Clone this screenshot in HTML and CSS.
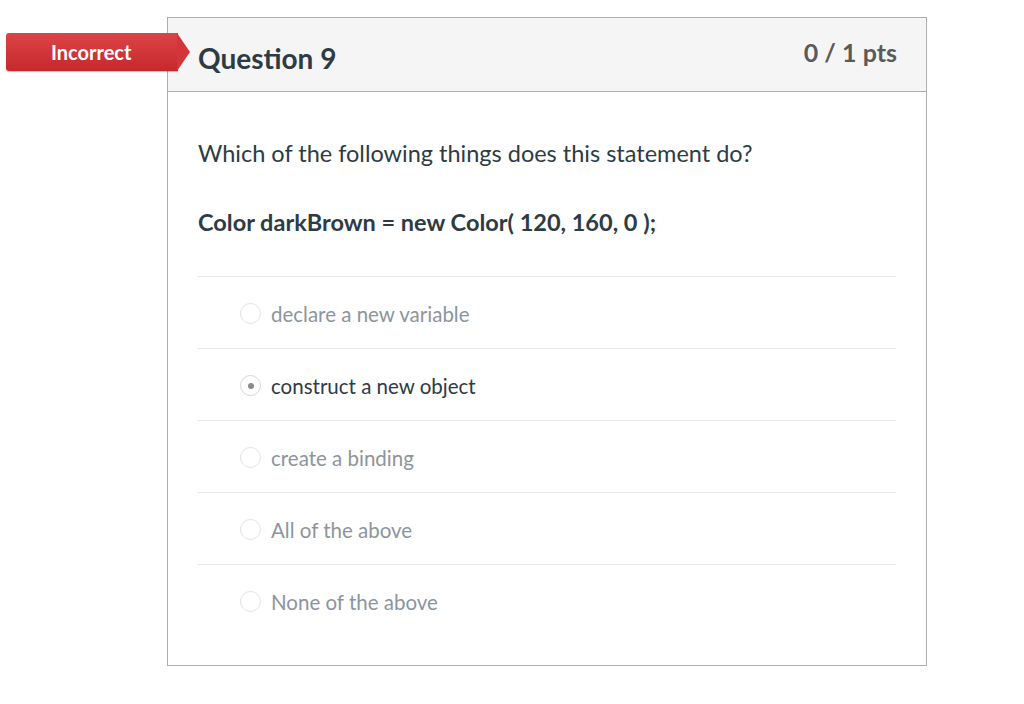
FILE: index.html
```html
<!DOCTYPE html>
<html>
<head>
<meta charset="utf-8">
<link rel="stylesheet" href="styles.css">
</head>
<body>
<div class="page">
  <div class="badge">Incorrect</div>
  <div class="card">
    <div class="card-header">
      <h2 class="title">Question 9</h2>
      <div class="pts">0 / 1 pts</div>
    </div>
    <div class="card-body">
      <p class="q">Which of the following things does this statement do?</p>
      <p class="code">Color darkBrown = new Color( 120, 160, 0 );</p>
      <ul class="answers">
        <li class="answer"><span class="radio"></span><span class="label">declare a new variable</span></li>
        <li class="answer selected"><span class="radio"></span><span class="label">construct a new object</span></li>
        <li class="answer"><span class="radio"></span><span class="label">create a binding</span></li>
        <li class="answer"><span class="radio"></span><span class="label">All of the above</span></li>
        <li class="answer"><span class="radio"></span><span class="label">None of the above</span></li>
      </ul>
    </div>
  </div>
</div>
</body>
</html>
```

FILE: styles.css
```css
* { box-sizing: border-box; }
html, body { margin: 0; padding: 0; background: #fff; }
body { font-family: Lato, "Liberation Sans", sans-serif; color: #2d3b45; }
.page { position: relative; padding: 17px 0 0 167px; }
.card {
  width: 760px;
  height: 649px;
  border: 1px solid #aeaeae;
  background: #fff;
}
.card-header {
  height: 74px;
  background: #f5f5f5;
  border-bottom: 1px solid #aeaeae;
  display: flex;
  justify-content: space-between;
  align-items: flex-start;
  padding: 0 29px 0 30px;
}
.title {
  margin: 0;
  padding-top: 23px;
  font-size: 28px;
  font-weight: 700;
  line-height: 34px;
  color: #2d3b45;
}
.pts {
  padding-top: 19px;
  font-size: 25px;
  font-weight: 700;
  line-height: 30px;
  color: #5a5a5a;
}
.badge {
  position: absolute;
  left: 6px;
  top: 33px;
  width: 172px;
  height: 38px;
  background: linear-gradient(#dc4448, #c6282d);
  color: #fff;
  font-weight: 700;
  font-size: 20px;
  line-height: 38px;
  padding-left: 45px;
  border-radius: 3px 0 0 3px;
  box-shadow: 0 1px 1px rgba(0,0,0,0.25);
}
.badge::after {
  content: "";
  position: absolute;
  left: 171px;
  top: 0;
  border-top: 19px solid transparent;
  border-bottom: 19px solid transparent;
  border-left: 13px solid #d2363b;
}
.card-body { padding: 0 30px; }
.q {
  margin: 0;
  padding-top: 46px;
  font-size: 23.5px;
  line-height: 30px;
  color: #2d3b45;
}
.code {
  margin: 0;
  padding-top: 39px;
  font-size: 23.5px;
  font-weight: 700;
  line-height: 30px;
  color: #2d3b45;
}
.answers {
  list-style: none;
  margin: 39px 0 0 0;
  padding: 0;
}
.answer {
  height: 72px;
  border-top: 1px solid #e6e6e6;
  display: flex;
  align-items: center;
  padding-left: 42px;
  padding-top: 2px;
  font-size: 20.5px;
  color: #8c959d;
}
.radio {
  width: 21px;
  height: 21px;
  border: 1px solid #e3e3e3;
  border-radius: 50%;
  margin-right: 10px;
  display: flex;
  align-items: center;
  justify-content: center;
  flex: none;
}
.selected { color: #2d3b45; }
.selected .radio { border-color: #d6d6d6; }
.selected .radio::after {
  content: "";
  width: 6px;
  height: 6px;
  border-radius: 50%;
  background: #8a8a8a;
}
```
